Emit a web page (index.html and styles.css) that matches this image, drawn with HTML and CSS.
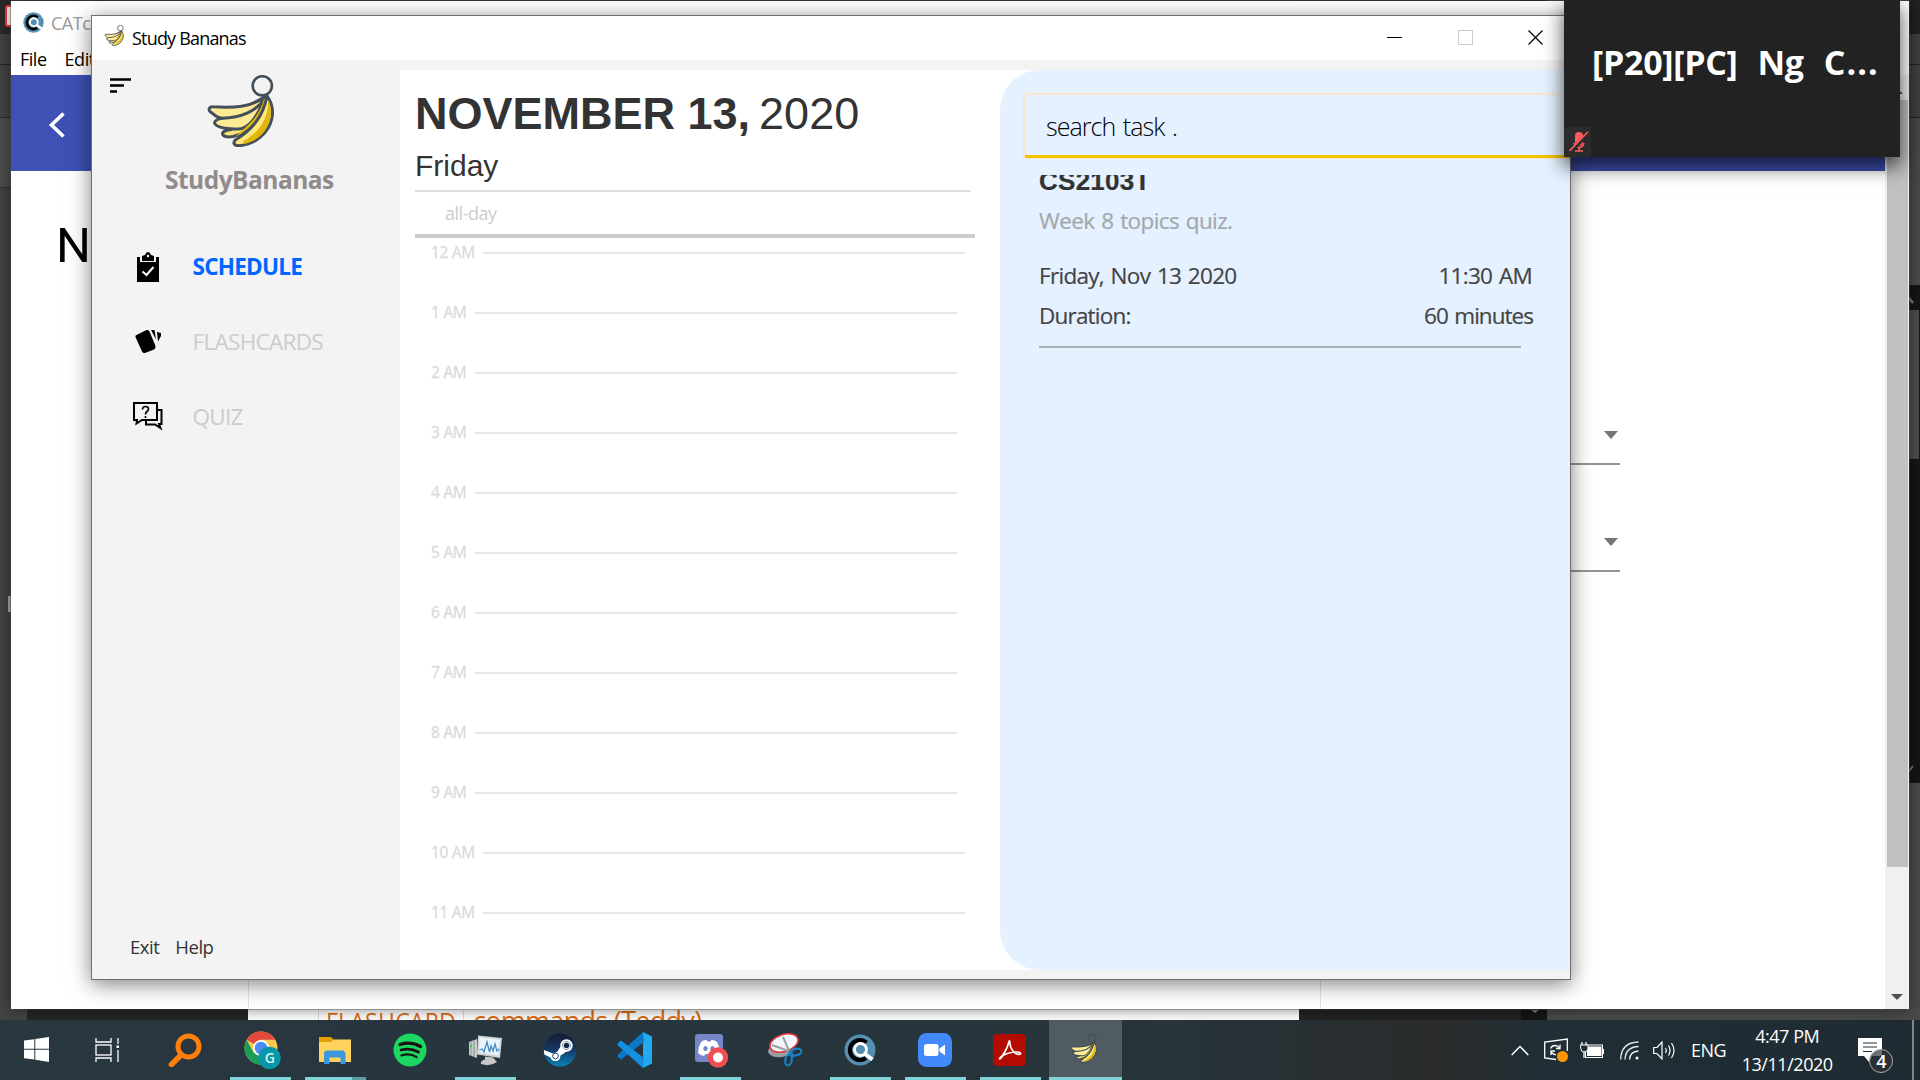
FILE: index.html
```html
<!DOCTYPE html>
<html lang="en">
<head>
<meta charset="utf-8">
<title>Study Bananas</title>
<link rel="stylesheet" href="styles.css">
</head>
<body>
<svg class="defs" width="0" height="0" aria-hidden="true">
  <symbol id="bananas" viewBox="0 0 67 72">
    <circle cx="55.3" cy="10.8" r="9.6" fill="none" stroke="#434f59" stroke-width="2.6"/>
    <g stroke="#434f59" stroke-width="3" stroke-linejoin="round" stroke-linecap="round">
      <path fill="#fbe27a" d="M58 22C55 44 42 58 26 61.500C20 62.500 15.500 61.500 15.500 58.500C16 56 20 55 24 54.500Z"/>
      <path fill="#ffeb96" d="M58 22C52 38 44 51 35 53.500C25 55 8.500 53 7.500 48C7.500 45 12 43.500 18 42.500Z"/>
      <path fill="#ffeb96" d="M56 23C44 32 28 33 6 31.800C2.500 31.500 1 34.500 3 36.500C6 38.500 9 43 15 43.200C34 43 50 36 58 23Z"/>
      <path fill="#e1b70c" stroke="none" d="M57 24C54 36 47 45 38 53L28 62C44 54 55 42 60 24Z"/>
      <path fill="#ffe97f" d="M60 21C56 43 44 55 29 64.500C25.500 67 26.500 70.500 31 70.700C48 70 62 58 65 43C66.500 34 64.500 27 60 21Z"/>
    </g>
    <path fill="#e1b70c" d="M61 25C62 42 53 58 36 66L37 69C51 66 60 57 63.300 43C64.500 35 63.500 29 61 25Z"/>
  </symbol>
  <symbol id="catcher" viewBox="0 0 32 32">
    <circle cx="16" cy="16" r="15.500" fill="#548eb1"/>
    <path d="M22.500 8.500A10 10 0 1 0 22 24" fill="none" stroke="#000" stroke-width="4.200"/>
    <circle cx="16.500" cy="15.500" r="6" fill="#548eb1" stroke="#fff" stroke-width="2.800"/>
    <path d="M21 20L28.500 25.500" stroke="#fff" stroke-width="4"/>
  </symbol>
</svg>

<div class="backdrop">
  <div class="bd-rail"><i class="bd-dark"><b class="bd-red"></b></i><i class="bd-bar"></i><i class="bd-bar2"></i><i class="bd-bar3"></i><b class="bd-handle"></b></div>
  <div class="bd-gutter"></div>
  <div class="bd-page"><span class="bd-cell1">FLASHCARD</span><span class="bd-cell2">commands (Teddy)</span></div>
  <div class="bd-gutter2"></div>
  <div class="bd-scroll"><svg width="8" height="3"><path d="M0 0H8L4 3Z" fill="#777"/></svg></div>
  <div class="bd-side"><div class="bd-sidebar"><i class="s1"></i><i class="s2"></i><i class="s3"></i><i class="s4"></i>
    <div class="s5"><svg width="5" height="8" viewBox="0 0 5 8"><path d="M0 1L4 6" stroke="#777" stroke-width="2.500"/></svg><i></i><svg width="5" height="8" viewBox="0 0 5 8"><path d="M0 6L4 1" stroke="#777" stroke-width="2"/></svg></div></div></div>
</div>

<section class="catcher">
  <div class="c-title"><svg width="21" height="21"><use href="#catcher"/></svg><span>CATcher</span></div>
  <div class="c-menu"><span>File</span><span>Edit</span></div>
  <div class="c-main">
    <div class="c-content">
      <header class="c-header"><svg width="18" height="26" viewBox="0 0 18 26"><path d="M15.500 1.500L3.500 13L15.500 24.500" fill="none" stroke="#fff" stroke-width="3.600"/></svg></header>
      <h2 class="c-heading">N</h2>
      <div class="c-fields">
        <div class="c-select"><svg width="14" height="8"><path d="M0 0H14L7 8Z" fill="#757575"/></svg></div>
        <div class="c-select"><svg width="14" height="8"><path d="M0 0H14L7 8Z" fill="#757575"/></svg></div>
      </div>
      <div class="c-card"></div>
    </div>
    <div class="c-scroll">
      <svg width="12" height="6"><path d="M0 6H12L6 0Z" fill="#505050"/></svg>
      <i></i>
      <svg width="12" height="6"><path d="M0 0H12L6 6Z" fill="#505050"/></svg>
    </div>
  </div>
</section>

<section class="study">
  <div class="titlebar">
    <svg width="20" height="21"><use href="#bananas"/></svg>
    <span>Study Bananas</span>
    <div class="controls">
      <svg width="15" height="15"><path d="M0 7.500H15" stroke="#000"/></svg>
      <svg width="15" height="15"><rect x=".5" y=".5" width="14" height="14" fill="none" stroke="#ccc"/></svg>
      <svg width="15" height="15"><path d="M.5 .5L14.500 14.500M14.500 .5L.5 14.500" stroke="#000" stroke-width="1.200"/></svg>
    </div>
  </div>
  <div class="workspace">
    <aside class="sidebar">
      <div class="brand-row">
        <svg class="burger" width="21" height="15"><path d="M0 1.500H21M0 7.500H14M0 13.500H7" stroke="#000" stroke-width="2.600"/></svg>
        <svg class="logo" width="67" height="72"><use href="#bananas"/></svg>
      </div>
      <div class="brand">StudyBananas</div>
      <nav>
        <a class="active"><svg width="32" height="32" viewBox="0 0 32 32"><path d="M5 6H8V11H24V6H27V31H5Z"/><path d="M10 10V5L13 4Q14 1 16 1Q18 1 19 4L22 5V10Z"/><circle cx="16" cy="5" r="1.200" fill="#fff"/><path d="M10.500 20.500L14.500 24L21.500 16" fill="none" stroke="#fff" stroke-width="2"/></svg><span>SCHEDULE</span></a>
        <a><svg width="32" height="32" viewBox="0 0 32 32"><path d="M4.500 9L14.500 4Q16.500 3.500 17.500 5.500L23.500 20Q24 22 22 23.500L13 27Q11 27.500 10 25.500L3.500 11Q3 9.500 4.500 9Z"/><path d="M19 4H22.500L24 13.500Z M25 6L29 7V10L26 15.500Z"/></svg><span>FLASHCARDS</span></a>
        <a><svg width="32" height="32" viewBox="0 2 32 32" fill="none" stroke="#000" stroke-width="2"><path d="M2 4H25V21H10L4.500 24.500L5 21H2Z"/><path d="M25 11H29.500V25H27L28.500 29L23 25.500H14V21.500"/><path d="M10.500 10.500Q10.500 7.500 13.500 7.500Q16.500 7.500 16.500 10Q16.500 11.500 15 12.500Q13.500 13.500 13.500 15.500M13.500 17V19" stroke-width="1.700"/></svg><span>QUIZ</span></a>
      </nav>
      <div class="side-foot"><span>Exit</span><span>Help</span></div>
    </aside>
    <main class="content">
      <section class="calendar">
        <h1><b>NOVEMBER 13,</b><span>2020</span></h1>
        <div class="weekday">Friday</div>
        <div class="rule thin"></div>
        <div class="allday">all-day</div>
        <div class="rule thick"></div>
        <ol class="hours">
          <li class="wide"><span>12 AM</span><i></i></li>
          <li><span>1 AM</span><i></i></li>
          <li><span>2 AM</span><i></i></li>
          <li><span>3 AM</span><i></i></li>
          <li><span>4 AM</span><i></i></li>
          <li><span>5 AM</span><i></i></li>
          <li><span>6 AM</span><i></i></li>
          <li><span>7 AM</span><i></i></li>
          <li><span>8 AM</span><i></i></li>
          <li><span>9 AM</span><i></i></li>
          <li class="wide"><span>10 AM</span><i></i></li>
          <li class="wide"><span>11 AM</span><i></i></li>
        </ol>
      </section>
      <section class="tasks">
        <div class="search"><span>search task .</span></div>
        <article class="task">
          <div class="task-clip"><h3>CS2103T</h3></div>
          <p class="desc">Week 8 topics quiz.</p>
          <div class="pair when"><span>Friday, Nov 13 2020</span><span>11:30 AM</span></div>
          <div class="pair"><span class="label">Duration:</span><span class="minutes">60 minutes</span></div>
        </article>
      </section>
    </main>
  </div>
</section>

<section class="call">
  <div class="caller"><span>[P20][PC]</span><span>Ng</span><span class="initial">C...</span></div>
  <div class="mic"><svg width="20" height="22" viewBox="0 0 20 22"><rect x="6" y="1" width="8" height="14" rx="4" fill="#ff5c5c"/><path d="M5 12Q6 16.500 10 16.500Q14 16.500 15 12M10 16V20M6 20H14" fill="none" stroke="#ff5c5c" stroke-width="1.600"/><path d="M1 21L20 2" stroke="#2b2b2b" stroke-width="4"/><path d="M.5 20L19 .8" stroke="#ff5c5c" stroke-width="1.600"/></svg></div>
</section>

<footer class="taskbar">
  <div class="tb tb-start"><svg width="25" height="25" viewBox="0 0 25 25" fill="#fff"><path d="M0 3.500L10.300 2.200V11.700H0ZM11.300 2L25 0V11.700H11.300ZM0 12.700H10.300V22.500L0 21.200ZM11.300 12.700H25V25L11.300 22.800Z"/></svg></div>
  <div class="tb tb-view"><svg width="25" height="24" viewBox="0 0 25 24" fill="none" stroke="#fff" stroke-width="1.300"><path d="M1 0V4H16V0M1 24V20H16V24M23 0V6M23 12V24"/><rect x="1" y="7" width="15" height="10"/><rect x="21.500" y="7.500" width="2.500" height="2.500" fill="#fff" stroke="none"/></svg></div>
  <div class="tb"><svg width="34" height="34" viewBox="0 0 34 34" fill="none" stroke="#ff7f0a"><circle cx="20.500" cy="13.500" r="10.500" stroke-width="5"/><path d="M13 22L3.500 31.500" stroke-width="5.500" stroke-linecap="round"/></svg></div>
  <div class="tb on chrome"><svg width="38" height="38" viewBox="0 0 38 38"><circle cx="18" cy="17" r="16.500" fill="#fbc94b"/><path d="M18 17L3.700 8.800A16.500 16.500 0 0 1 32.300 8.800H18Z" fill="#e0493c"/><path d="M3.700 8.800A16.500 16.500 0 0 0 18 33.500L25.500 21L18 25.500L10.500 21.500Z" fill="#189e56"/><circle cx="18" cy="17" r="8" fill="#fff"/><circle cx="18" cy="17" r="6.300" fill="#4c8bf5"/><circle cx="26.500" cy="27" r="11.200" fill="#0797a7"/><text x="26.500" y="32" text-anchor="middle" class="g-badge">G</text></svg></div>
  <div class="tb on split"><svg width="32" height="28" viewBox="0 0 32 28"><path d="M0 1H12L15 4H30V8H0Z" fill="#e3a106"/><path d="M0 6H12L15 3.500H32V26H0Z" fill="#ffd35c"/><path d="M5 28V18Q5 14.500 8 14.500H23Q26.500 14.500 26.500 18V28H21.500V21.500H10.500V28Z" fill="#3d96e0"/></svg></div>
  <div class="tb"><svg width="34" height="34" viewBox="0 0 34 34"><circle cx="17" cy="17" r="16.500" fill="#1ed760"/><g fill="none" stroke="#191414" stroke-linecap="round"><path d="M7 11.500Q18 8 27.500 13.500" stroke-width="3.400"/><path d="M8 17Q17.500 14.500 25.500 19" stroke-width="2.800"/><path d="M8.500 22.300Q17 20 23.500 24" stroke-width="2.300"/></g></svg></div>
  <div class="tb on"><svg width="34" height="34" viewBox="0 0 34 34"><path d="M1 9L9 6V25L1 22Z" fill="#c9cbcb"/><path d="M3 8V23M6 7V24" stroke="#8b9092"/><path d="M2 12H4V14H2Z" fill="#2fd128"/><path d="M10 2.500L34 5L32 25L9 21.500Z" fill="#d2d5d6"/><path d="M11.500 4.500L32 6.700L30.500 22.500L11 19.500Z" fill="#eaf4fb"/><path d="M11.500 17L14 16L16 19L19 9L21.500 19L23 13L25 18L27 11L29 18L31 16" fill="none" stroke="#3c8fc4" stroke-width="1.300"/><path d="M17 23.500L25 24.500L29 29Q22 34 13 31Q12 28 17 26.500Z" fill="#c5c7c8"/></svg></div>
  <div class="tb"><svg width="34" height="34" viewBox="0 0 34 34"><defs><linearGradient id="steam" x2="0" y2="1"><stop stop-color="#141a35"/><stop offset=".5" stop-color="#153a66"/><stop offset="1" stop-color="#0b84b8"/></linearGradient></defs><circle cx="17" cy="17" r="16.500" fill="url(#steam)"/><path d="M.8 17L10 20.500L14 19L18 13L27 16L20 21L17.500 22.500Q17 28 12.500 28Q8.500 28 7.500 24.500L1.300 21.500Z" fill="#fff"/><circle cx="12.500" cy="23" r="2.800" fill="none" stroke="#1b4f80"/><circle cx="23.500" cy="12.500" r="5.200" fill="#15294f" stroke="#fff" stroke-width="2"/><circle cx="23.500" cy="12.500" r="3.300" fill="#15294f" stroke="#dfe7ee" stroke-width="1.200"/></svg></div>
  <div class="tb"><svg width="36" height="36" viewBox="0 0 36 36"><path d="M26 0L35 4.500V31.500L26 36Z" fill="#23a9f2"/><path d="M26 0L1 22.500Q0 24 1 25L4 27.500L27 10Z" fill="#0a78c6"/><path d="M26 36L1 13.500Q0 12 1 11L4 8.500L27 26Z" fill="#1390df"/></svg></div>
  <div class="tb on discord"><svg width="34" height="36" viewBox="0 0 34 36"><rect x="0" y="2" width="28" height="28" rx="3" fill="#7586cb"/><path d="M6 10Q9 7.500 11.500 8L12.500 9.500H15.500L16.500 8Q19 7.500 22 10Q25 15 25 21Q22 24 19 24L17.500 22H10.500L9 24Q6 24 3 21Q3 15 6 10Z" fill="#fff"/><ellipse cx="10.500" cy="16.500" rx="2.200" ry="2.500" fill="#7586cb"/><ellipse cx="17.500" cy="16.500" rx="2.200" ry="2.500" fill="#7586cb"/><circle cx="23" cy="25.500" r="10.200" fill="#f04f52"/><circle cx="23" cy="25.500" r="5" fill="#fff"/></svg></div>
  <div class="tb"><svg width="34" height="36" viewBox="0 0 34 36"><ellipse cx="13" cy="18" rx="13" ry="7" fill="#9b9fa2" transform="rotate(-8 13 18)"/><ellipse cx="16" cy="11" rx="14.500" ry="8.500" fill="#f4f6f7" stroke="#dc3a3e" stroke-width="1.600" transform="rotate(-18 16 11)"/><path d="M15 5L22 21M4 13L23 20" stroke="#9aa0a4" stroke-width="2"/><ellipse cx="28" cy="20" rx="5.500" ry="3.200" fill="none" stroke="#1680c5" stroke-width="2.200" transform="rotate(-12 28 20)"/><ellipse cx="20.500" cy="28" rx="3.200" ry="5.500" fill="none" stroke="#1680c5" stroke-width="2.200" transform="rotate(12 20.500 28)"/><path d="M21 19L26 25" stroke="#1680c5" stroke-width="3"/></svg></div>
  <div class="tb on"><svg width="32" height="32"><use href="#catcher"/></svg></div>
  <div class="tb on"><svg width="34" height="34" viewBox="0 0 34 34"><rect width="34" height="34" rx="8.500" fill="#4289fb"/><rect x="6" y="11" width="14.500" height="12" rx="2.500" fill="#fff"/><path d="M21.500 15.500L27 11.500V22.500L21.500 18.500Z" fill="#fff"/></svg></div>
  <div class="tb on"><svg width="33" height="32" viewBox="0 0 33 32"><rect width="33" height="32" rx="4" fill="#b30b00"/><path d="M7 24C10 22 14 15 15.500 9C16 6 17 6 16.800 9C17 14 21 20 26 20.500C29 20 27 18 24 18C18 18 12 20 8.500 22.500C5.500 25 6.500 26 9 23Z" fill="none" stroke="#fff" stroke-width="1.700"/></svg></div>
  <div class="tb on current"><svg width="27" height="29"><use href="#bananas"/></svg></div>
  <div class="tray">
    <svg width="18" height="11"><path d="M.7 10L9 1.500L17.300 10" fill="none" stroke="#fff" stroke-width="1.500"/></svg>
    <svg class="i2" width="24" height="24" viewBox="0 0 24 24" fill="none" stroke="#fff" stroke-width="1.300"><path d="M12 21.500L.7 20V4L23.300 1V13"/><path d="M6.500 10.500Q8 7.500 11 7.500Q14 7.500 15.500 10M16 6.500V10.500H12M7 17V13H11M7 13.500Q9 17 12 16.500"/><circle cx="18.500" cy="18.500" r="5.500" fill="#ff9500" stroke="none"/></svg>
    <svg class="i3" width="24" height="17" viewBox="0 0 24 17"><rect x="7" y="4.500" width="14.500" height="9.500" fill="#fff"/><rect x="5.500" y="3" width="17" height="12.500" fill="none" stroke="#fff"/><path d="M23.500 7V12" stroke="#fff"/><path d="M0 3H8V7Q7 10 4 10Q1 10 1 7Z" fill="#202e36" stroke="#fff"/><path d="M2 0V3M6 0V3M4 10V16" stroke="#fff" stroke-width="1.300"/></svg>
    <svg class="i4" width="19" height="19" viewBox="0 0 19 19" fill="none" stroke="#e6eaec" stroke-width="1.300"><path d="M.7 18.500Q1 1.500 18.500 1M5 18.500Q5.500 6 18.500 5.500M9.500 18.500Q10 10.500 18.500 10"/><circle cx="17" cy="17" r="1.500" fill="#fff" stroke="none"/></svg>
    <svg class="i5" width="23" height="19" viewBox="0 0 23 19" fill="none" stroke="#fff" stroke-width="1.200"><path d="M.7 6.500H4L9 1V18L4 12.500H.7Z"/><path d="M12.500 7Q14 9.500 12.500 12M15.500 4.500Q18.500 9.500 15.500 14.500M18.500 2Q23.500 9.500 18.500 17"/></svg>
    <span class="lang">ENG</span>
    <div class="clock"><span>4:47 PM</span><span>13/11/2020</span></div>
    <div class="notif"><svg width="24" height="24"><path d="M0 0H24V18H14L11 24L6 18H0Z" fill="#fff"/><path d="M5 5H19M5 9H19M5 13.500H14" stroke="#222e35" stroke-width="1.200"/></svg><b>4</b></div>
  </div>
</footer>
</body>
</html>
```
FILE: styles.css
```css
* { box-sizing: border-box; }
body {
  margin: 0;
  width: 1920px;
  height: 1080px;
  position: relative;
  overflow: hidden;
  background: #444;
  font-family: "Open Sans", "Noto Sans", sans-serif;
  letter-spacing: -0.03em;
}
svg { display: block; flex: none; }
h1, h2, h3, p, ol { margin: 0; padding: 0; font-weight: 400; }
i, b { display: block; font-style: normal; }
.defs { position: absolute; }

/* windows at the back of the desktop */
.backdrop { display: flex; height: 1020px; }
.bd-rail { width: 27px; background: #434343; display: flex; flex-direction: column; }
.bd-dark { height: 34px; background: #2a2a2a; padding: 5px 0 0 5px; }
.bd-red { width: 20px; height: 22px; border: 2px solid #f33; border-radius: 3px; background: #fff; }
.bd-bar { height: 31px; border-bottom: 1px solid #222; }
.bd-bar2 { height: 53px; border-bottom: 1px solid #2a2a2a; }
.bd-bar3 { height: 70px; background: #4c4c4c; border-bottom: 1px solid #333; }
.bd-handle { width: 8px; height: 16px; margin: 408px 0 0 8px; background: #aaa; }
.bd-gutter { width: 221px; background: #262626; }
.bd-page {
  width: 1051px;
  background: #fff;
  border-top: 1px solid #333;
  display: flex;
  align-items: flex-end;
  color: #de6c12;
  font-weight: 500;
  padding-left: 70px;
}
.bd-page span { height: 10px; white-space: nowrap; }
.bd-cell1 { width: 146px; padding-left: 7px; border: solid #ddd; border-width: 0 1px; font-size: 23px; line-height: 23px; letter-spacing: 0.01em; }
.bd-cell2 { padding-left: 9px; font-size: 27px; line-height: 21px; letter-spacing: -0.026em; }
.bd-gutter2 { width: 222px; background: #232323; }
.bd-scroll { width: 26px; background: #151515; padding: 1010px 0 0 10px; }
.bd-side { flex: 1; background: #4a4a4a; display: flex; justify-content: flex-end; }
.bd-sidebar { width: 12px; display: flex; flex-direction: column; }
.s1 { height: 34px; background: #222; }
.s2 { height: 31px; background: #424242; border-bottom: 1px solid #222; }
.s3 { height: 53px; background: #424242; border-bottom: 1px solid #222; }
.s4 { height: 167px; background: #4a4a4a; }
.s5 { height: 498px; background: #151515; padding: 12px 0 10px 1px; display: flex; flex-direction: column; justify-content: space-between; }
.s5 i { width: 10px; height: 149px; margin-bottom: 301px; background: #4c4c4c; }

/* CATcher window */
.catcher {
  position: absolute;
  left: 11px;
  top: 1px;
  width: 1898px;
  height: 1008px;
  background: #fff;
  display: flex;
  flex-direction: column;
  box-shadow: 0 0 0 1px #4a4a4a66, 0 0 14px rgba(0, 0, 0, .5);
}
.c-title { height: 42px; display: flex; align-items: center; gap: 7px; padding-left: 12px; font-size: 18px; color: #999; }
.c-title span { padding-top: 2px; }
.c-menu { height: 32px; display: flex; gap: 18px; padding-left: 9px; font-size: 18px; line-height: 32px; }
.c-main { flex: 1; display: flex; }
.c-content { flex: 1; display: flex; flex-direction: column; }
.c-header { height: 96px; background: #3f51b5; padding: 37px 0 0 37px; }
.c-heading { font: 49px/56px Roboto, sans-serif; letter-spacing: 0; margin: 47px 0 0 45px; }
.c-fields { align-self: flex-end; width: 60px; margin: 157px 265px 0 0; }
.c-select { height: 34px; display: flex; align-items: flex-start; justify-content: flex-end; padding-right: 2px; margin-bottom: 73px; border-bottom: 2px solid #949494; }
.c-card { flex: 1; width: 1073px; margin-left: 237px; border: solid #e2e2e2; border-width: 0 1px; }
.c-scroll { width: 24px; background: #f0f0f0; display: flex; flex-direction: column; align-items: center; padding: 13px 0 9px; }
.c-scroll i { width: 21px; height: 767px; margin: 6px 0 auto; background: #c1c1c1; }

/* Study Bananas window */
.study {
  position: absolute;
  left: 91px;
  top: 15px;
  width: 1480px;
  height: 965px;
  border: 1px solid #707070;
  background: #f3f3f3;
  display: flex;
  flex-direction: column;
  box-shadow: 0 4px 20px rgba(0, 0, 0, .5);
}
.titlebar { height: 44px; background: #fff; display: flex; align-items: center; padding: 0 27px 0 12px; font-size: 18px; line-height: 45px; letter-spacing: -0.045em; }
.titlebar > span { margin-left: 8px; }
.titlebar > svg { margin-bottom: 6px; }
.controls { margin-left: auto; display: flex; gap: 56px; }
.controls svg { margin-top: -1px; }
.controls svg:last-child { margin-left: -1px; }
.workspace { flex: 1; display: flex; }
.sidebar { width: 308px; display: flex; flex-direction: column; padding-bottom: 21px; }
.brand-row { display: flex; align-items: flex-start; padding: 15px 0 0 18px; }
.burger { margin-top: 3px; }
.logo { margin-left: 76px; }
.brand { margin: 15px 0 31px 73px; font-size: 24.500px; line-height: 36px; letter-spacing: -0.021em; font-weight: 700; color: #918b8b; }
.sidebar nav a { height: 75px; display: flex; align-items: center; gap: 28.500px; padding-left: 40px; font-size: 22.500px; letter-spacing: -0.031em; color: #ccc; }
.sidebar nav .active { color: #06f; font-weight: 700; letter-spacing: -0.033em; }
.side-foot { margin-top: auto; display: flex; gap: 16px; padding-left: 38px; font-size: 18.500px; line-height: 23px; color: #333; }

.content { flex: 1; margin: 10px 0 9px; background: #fff; display: flex; }
.calendar { width: 600px; padding: 17px 0 0 15px; color: #333; }
.calendar h1 { display: flex; gap: 9px; font: 45px/54px "Liberation Sans", Arial, sans-serif; letter-spacing: 0; }
.weekday { margin: 5px 0 4px; font: 30px/40px "Liberation Sans", Arial, sans-serif; letter-spacing: 0; }
.thin { width: 556px; height: 2px; background: #e0e0e0; }
.thick { width: 560px; height: 4px; background: #ccc; }
.allday { padding-left: 30px; font-size: 18px; line-height: 42px; color: #ccc; }
.hours { list-style: none; padding: 5px 0 0 16px; display: flex; flex-direction: column; gap: 40px; }
.hours li { height: 20px; display: flex; gap: 9px; }
.hours span { width: 35px; font-size: 15.500px; line-height: 18px; word-spacing: .5px; white-space: nowrap; color: #dadada; -webkit-text-stroke: .3px #dadada; }
.hours .wide span { width: 43px; }
.hours i { width: 482px; height: 2px; margin-top: 9px; background: #e8e8e8; }

.tasks { flex: 1; background: #e5f1ff; border-radius: 40px 0 0 40px; padding: 23px 0 0 23px; color: #444; }
.search { height: 66px; border: solid #f7e8d2; border-width: 2px 0 1px 2px; display: flex; }
.search span { flex: 1; border-bottom: 3px solid #f4c400; padding-left: 21px; font-size: 25px; line-height: 63px; letter-spacing: -0.038em; word-spacing: 2px; font-weight: 300; color: #000; }
.task { width: 482px; margin: 16px 0 0 16px; font-size: 22.500px; line-height: 40px; word-spacing: 1.500px; border-bottom: 2px solid #a9b2ba; height: 173px; letter-spacing: -0.031em; -webkit-text-stroke: .2px; }
.task-clip { height: 20px; overflow: hidden; }
.task h3 { margin-top: -9px; font: 700 26px/30px "Liberation Sans", Arial, sans-serif; letter-spacing: .01em; color: #333; }
.desc { color: #a3a7ab; margin: 6px 0 15px; letter-spacing: -0.027em; }
.pair { display: flex; justify-content: space-between; margin-right: -12px; white-space: nowrap; }
.when { padding-right: 1px; }
.label { letter-spacing: -0.036em; }
.minutes { letter-spacing: -0.043em; }

/* floating call thumbnail */
.call { position: absolute; left: 1564px; top: 0; width: 336px; height: 157px; background: #222; box-shadow: 0 9px 18px 1px rgba(0, 0, 0, .65); display: flex; flex-direction: column; justify-content: space-between; }
.caller { display: flex; gap: 20px; padding-left: 28px; font-size: 34px; line-height: 125px; letter-spacing: -0.009em; font-weight: 700; color: #fff; }
.initial { letter-spacing: .03em; }
.mic { width: 27px; height: 30px; background: #2b2b2b; padding: 4px 0 0 5px; margin-top: -4px; }

/* taskbar */
.taskbar { position: absolute; left: 0; top: 1020px; width: 1920px; height: 60px; display: flex; background: linear-gradient(90deg, #283740 0, #26353c 900px, #27343a 1180px, #2a2b2b 1440px, #202e36 1540px, #1e2b33 100%); color: #fff; }
.tb { width: 75px; display: flex; align-items: center; justify-content: center; padding: 0 2px 1px 0; }
.tb-start { width: 72px; padding-right: 0; }
.tb-view { width: 70px; margin-right: 6px; padding-right: 0; }
.on { background: linear-gradient(#81d2d9, #81d2d9) 7px 100% / 61px 3px no-repeat; }
.chrome, .discord { padding-right: 0; padding-left: 2px; }
.split { background-image: linear-gradient(90deg, #81d2d9 47px, #5e9ea4 47px); }
.current { width: 73px; margin-left: 1px; padding: 0 5px 4px 0; background: linear-gradient(#515c61 57px, #81d2d9 57px); }
.g-badge { font: 600 14px "Open Sans", sans-serif; fill: #d7f4f6; }
.tray { flex: 1; display: flex; align-items: center; padding-left: 389px; border-right: 2px solid #7d868a; margin-right: 6px; font-size: 18px; }
.i2 { margin-left: 15px; }
.i3 { margin-left: 12px; }
.i4 { margin-left: 16px; }
.i5 { margin-left: 14px; }
.lang { margin-left: 15px; }
.clock { width: 110px; margin-left: 6px; display: flex; flex-direction: column; align-items: center; line-height: 28px; letter-spacing: -0.025em; }
.notif { position: relative; margin-left: 16px; margin-right: auto; }
.notif b { position: absolute; left: 11px; top: 11px; width: 24px; height: 24px; border-radius: 50%; border: 1px solid #aaa; background: rgba(45, 50, 54, .7); font-weight: 600; font-size: 18px; line-height: 22px; text-align: center; }
```
